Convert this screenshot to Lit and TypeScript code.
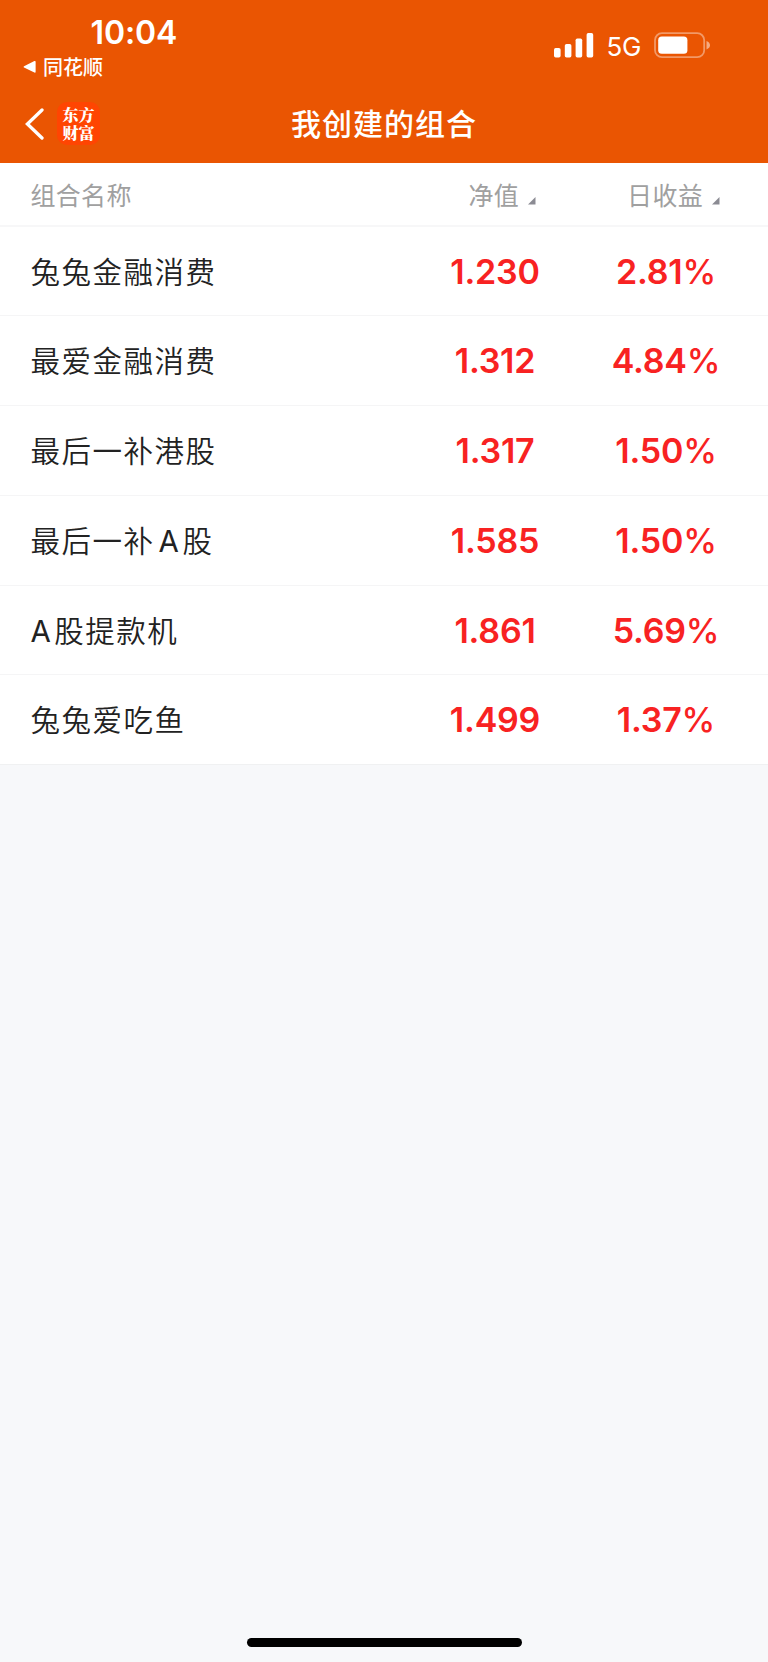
import { LitElement, html, css, svg } from "lit";
import { customElement } from "lit/decorators.js";

interface Portfolio {
  name: string;
  value: string;
  daily: string;
}

const portfolios: Portfolio[] = [
  { name: "兔兔金融消费", value: "1.230", daily: "2.81" },
  { name: "最爱金融消费", value: "1.312", daily: "4.84" },
  { name: "最后一补港股", value: "1.317", daily: "1.50" },
  { name: "最后一补A股", value: "1.585", daily: "1.50" },
  { name: "A股提款机", value: "1.861", daily: "5.69" },
  { name: "兔兔爱吃鱼", value: "1.499", daily: "1.37" },
];

@customElement("status-bar")
class StatusBar extends LitElement {
  static styles = css`
    :host { display: flex; justify-content: space-between; height: 86px; color: #fff; }
    .left { display: flex; flex-direction: column; padding-left: 23px; }
    .time { margin: 15px 0 0 67.5px; font: 600 32px/36px Inter, sans-serif; letter-spacing: -0.1px; }
    .return { display: flex; align-items: center; gap: 6px; height: 32px; font: 500 20px/32px "Noto Sans CJK SC", sans-serif; }
    .right { display: flex; align-items: flex-start; padding: 32px 57.5px 0 0; }
    .net { font: 400 26px/28px Inter, sans-serif; margin: 1px 0 0 13px; width: 34px; letter-spacing: -0.2px; }
    .battery { margin-left: 13px; }
    svg { display: block; flex: none; }
  `;

  render() {
    const bars = [[0, 16, 9.5], [10.8, 12, 13.5], [21.6, 6.5, 19], [32.6, 1, 24.5]];
    return html`
      <div class="left">
        <div class="time">10:04</div>
        <div class="return">
          <svg width="14" height="14" viewBox="0 0 14 14"><path d="M1 6.3 11.4 1Q12.6.6 12.6 1.8V11.8Q12.6 13 11.4 12.5L1 7.6Q0 7 1 6.3Z" fill="#fff"/></svg>
          <span>同花顺</span>
        </div>
      </div>
      <div class="right">
        <svg width="40" height="27" viewBox="0 0 40 27">
          ${bars.map(([x, y, h]) => svg`<rect x=${x} y=${y} width="6.6" height=${h} rx="1.7" fill="#fff"/>`)}
        </svg>
        <span class="net">5G</span>
        <svg class="battery" width="57" height="27" viewBox="0 0 57 27">
          <rect x="1" y="1.2" width="49.2" height="24" rx="7" fill="none" stroke="#fff" stroke-opacity=".4" stroke-width="1.8"/>
          <rect x="4.2" y="4.6" width="29.2" height="17.2" rx="3.6" fill="#fff"/>
          <path d="M52.5 9Q56 10.5 56 13.2T52.5 17.4Z" fill="#fff" fill-opacity=".5"/>
        </svg>
      </div>`;
  }
}

@customElement("nav-bar")
class NavBar extends LitElement {
  static styles = css`
    :host { display: grid; grid-template-columns: 1fr auto 1fr; align-items: start; height: 77px; color: #fff; }
    .left { display: flex; align-items: center; gap: 13px; padding: 16px 0 0 25px; }
    .logo { display: flex; flex-direction: column; align-items: center; justify-content: center; width: 43px; height: 43px; border-radius: 10px; background: #ff4502; font: 900 16px/18px "Noto Serif CJK SC", "Noto Sans CJK SC", sans-serif; }
    .title { font: 500 30px/44px "Noto Sans CJK SC", sans-serif; letter-spacing: 1px; padding-top: 14px; }
    svg { display: block; }
  `;

  render() {
    return html`
      <div class="left">
        <svg width="19" height="32" viewBox="0 0 19 32"><path d="M17 2 2.4 16 17 30" fill="none" stroke="#fff" stroke-width="3.3" stroke-linecap="round" stroke-linejoin="miter"/></svg>
        <div class="logo"><div>东方<br>财富</div></div>
      </div>
      <div class="title">我创建的组合</div>
      <div></div>`;
  }
}

@customElement("portfolio-table")
class PortfolioTable extends LitElement {
  static styles = css`
    :host { display: block; background: #fff; }
    .row { box-sizing: border-box; display: grid; grid-template-columns: 1fr 136px 206px; align-items: center; height: 89.75px; border-bottom: 1.5px solid #f5f5f6; }
    .row:last-child { border-bottom: 1px solid #f0f1f2; }
    .head { height: 63.5px; color: #a0a0a0; font: 400 25px/36px "Noto Sans CJK SC", sans-serif; letter-spacing: 0.3px; border-bottom: 2px solid #f7f7f8; }
    .name { padding-left: 30.5px; }
    .item { padding-top: 1.5px; }
    .item .name { color: #222; font: 350 29.5px/44px Inter, "Noto Sans CJK SC", sans-serif; letter-spacing: 1.5px; }
    .latin { font-weight: 400; margin: 0 2px 0 4px; }
    .latin.first { margin-left: 0; }
    .num { padding-left: 2px; text-align: center; color: #f82222; font: 600 34px/44px Inter, sans-serif; letter-spacing: -0.2px; }
    .pct { font-weight: 500; }
    .sort { display: flex; align-items: center; justify-content: flex-end; gap: 9px; }
    .sort.value { padding-right: 26.5px; }
    .sort.daily { padding-right: 48.5px; }
    .tri { margin-top: 14px; }
  `;

  private tri() {
    return html`<svg class="tri" width="7.5" height="7.5" viewBox="0 0 7 7"><path d="M7 0V7H0Z" fill="#8b8b93"/></svg>`;
  }

  private label(name: string) {
    return name.split(/(A)/).filter(Boolean).map((part, i) =>
      part === "A" ? html`<span class=${i === 0 ? "latin first" : "latin"}>${part}</span>` : part);
  }

  render() {
    return html`
      <div class="row head">
        <div class="name">组合名称</div>
        <div class="sort value"><span>净值</span>${this.tri()}</div>
        <div class="sort daily"><span>日收益</span>${this.tri()}</div>
      </div>
      ${portfolios.map((p) => html`
        <div class="row item">
          <div class="name">${this.label(p.name)}</div>
          <div class="num">${p.value}</div>
          <div class="num">${p.daily}<span class="pct">%</span></div>
        </div>`)}`;
  }
}

@customElement("app-root")
class AppRoot extends LitElement {
  static styles = css`
    :host { display: flex; flex-direction: column; height: 1662px; background: #f7f8fa; overflow: hidden; }
    .top { background: #ea5502; }
    .space { flex: 1; }
    .home { align-self: center; width: 275px; height: 9px; border-radius: 5px; background: #000; margin-bottom: 15px; }
  `;

  render() {
    return html`
      <div class="top"><status-bar></status-bar><nav-bar></nav-bar></div>
      <portfolio-table></portfolio-table>
      <div class="space"></div>
      <div class="home"></div>`;
  }
}
